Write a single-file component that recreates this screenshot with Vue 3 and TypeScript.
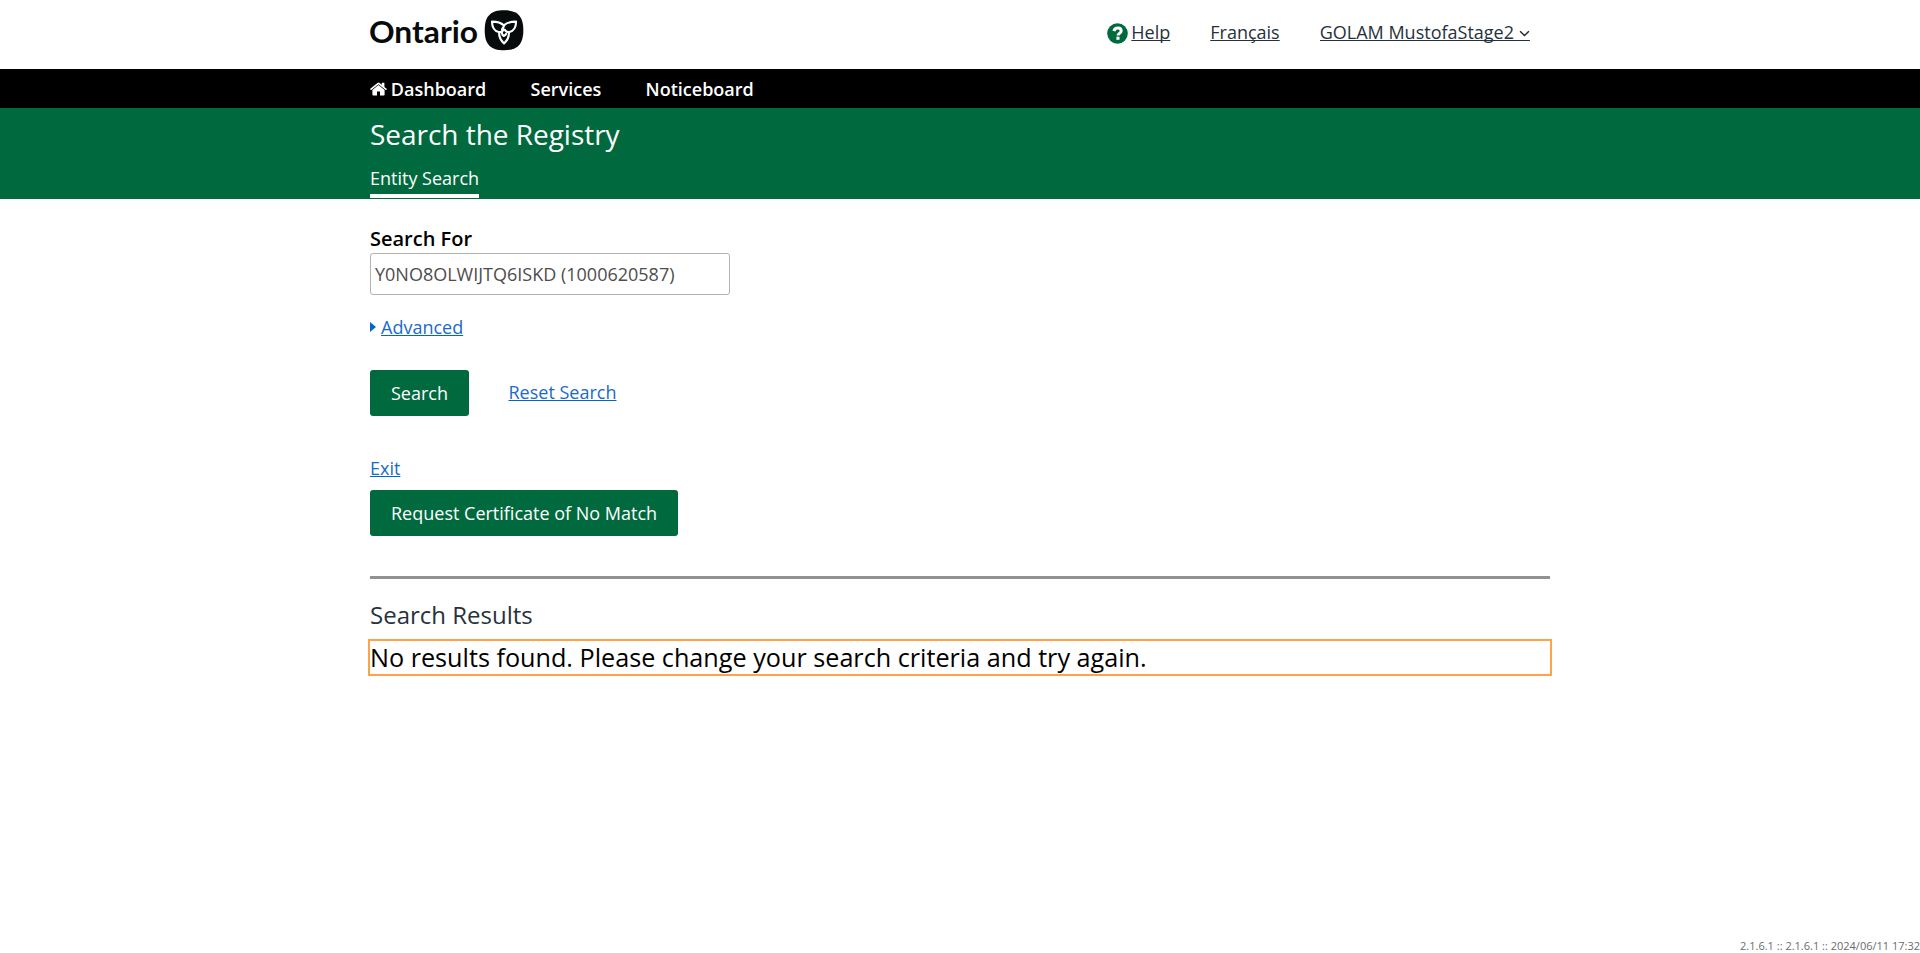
<script setup lang="ts">
import { ref } from 'vue'

const query = ref('Y0NO8OLWIJTQ6ISKD (1000620587)')
const navLinks: string[] = ['Services', 'Noticeboard']
const version = '2.1.6.1 :: 2.1.6.1 :: 2024/06/11 17:32'
</script>

<template>
  <div class="page">
    <header class="masthead">
      <div class="container masthead-row">
        <a class="logo" aria-label="Ontario">
          <svg width="154" height="60" viewBox="0 0 154 60">
            <text class="wordmark" x="-1" y="42.9" textLength="109" lengthAdjust="spacingAndGlyphs">Ontario</text>
            <g transform="translate(114.7 10.3) scale(0.33333)">
              <path d="M58 0C98 0 116 17 116 60S98 120 58 120 0 103 0 60 18 0 58 0Z" fill="#070b0b" />
              <g fill="none" stroke="#fff" stroke-width="6.5" stroke-linejoin="round" stroke-linecap="round">
                <path d="M52 57C56 50 60 48 57 45C48 36 36 34 22 34C22 50 29 63 42 65C50 66 54 63 55 59" />
                <path d="M58 45C67 36 80 34 94 34C94 50 87 63 74 65C67 66 62 63 60 58" />
                <path d="M43 66C43 79 47 90 58 99C69 90 73 79 73 66" />
                <path d="M55 58C49 65 51 74 58 77C61 75 63 73 64 71" />
              </g>
            </g>
          </svg>
        </a>
        <div class="tools">
          <span class="help">
            <svg class="help-icon" width="21" height="21" viewBox="0 0 21 21">
              <circle cx="10.5" cy="10.5" r="10.3" fill="#006a3e" />
              <path d="M6.9 8.1C7.4 6 8.9 5.1 10.7 5.1C12.8 5.1 14.2 6.3 14.2 8C14.2 10.3 11 10.1 11 12.5" fill="none" stroke="#fff" stroke-width="3" />
              <rect x="9.4" y="13.7" width="3.1" height="3.1" fill="#fff" />
            </svg>
            <a class="tool">Help</a>
          </span>
          <a class="tool">Français</a>
          <a class="tool user">
            <span>GOLAM MustofaStage2</span>
            <svg width="11" height="8" viewBox="0 0 11 8">
              <path d="M1.1 1.2L5.5 5.6L9.9 1.2" fill="none" stroke="#1d2932" stroke-width="1.4" />
            </svg>
          </a>
        </div>
      </div>
    </header>

    <nav class="nav">
      <div class="container nav-row">
        <a class="nav-link home">
          <svg width="17" height="14" viewBox="0 0 17 14" fill="#fff">
            <path d="M8.5 3.1L14.6 8.1V12.8Q14.6 13.5 13.9 13.5H10V9.5H7V13.5H3.1Q2.4 13.5 2.4 12.8V8.1Z" />
            <path d="M0 7.1L7.4 0.9Q8.5 0 9.6 0.9L11.8 2.8V0.8H14.4V5L17 7.1L16 8.3L8.5 2.2L1 8.3Z" />
          </svg>
          <span>Dashboard</span>
        </a>
        <a v-for="link in navLinks" :key="link" class="nav-link">{{ link }}</a>
      </div>
    </nav>

    <section class="banner">
      <div class="container">
        <h1>Search the Registry</h1>
        <a class="tab">Entity Search</a>
      </div>
    </section>

    <main class="container">
      <label class="label" for="query">Search For</label>
      <input id="query" v-model="query" class="field" type="text" />
      <div class="advanced">
        <span class="triangle"></span>
        <a class="link">Advanced</a>
      </div>
      <div class="actions">
        <button class="btn">Search</button>
        <a class="link reset">Reset Search</a>
      </div>
      <a class="link exit">Exit</a>
      <button class="btn">Request Certificate of No Match</button>
      <hr class="rule" />
      <h2>Search Results</h2>
      <p class="message">No results found. Please change your search criteria and try again.</p>
    </main>

    <footer class="version">{{ version }}</footer>
  </div>
</template>

<style>
body {
  margin: 0;
  background: #fff;
}
</style>

<style scoped>
.page {
  display: flex;
  flex-direction: column;
  box-sizing: border-box;
  height: 953px;
  overflow: hidden;
  font: 400 18px/24px "Open Sans", "Noto Sans", sans-serif;
  color: #26323b;
}
.container {
  width: 1180px;
  margin: 0 auto;
}
.masthead {
  height: 69px;
}
.masthead-row {
  display: flex;
  justify-content: space-between;
}
.logo svg {
  display: block;
}
.wordmark {
  font: 700 29.5px Lato, "Open Sans", sans-serif;
  fill: #070b0b;
}
.tools {
  display: flex;
  gap: 40px;
  padding: 20px 20px 0 0;
}
.help {
  display: flex;
  gap: 3.6px;
}
.help-icon {
  margin-top: 3px;
}
.tool {
  height: 24px;
  text-decoration: underline;
  text-decoration-thickness: 1px;
  text-decoration-skip-ink: none;
  white-space: nowrap;
}
.user {
  display: flex;
  align-items: center;
  gap: 5px;
  text-decoration: none;
  background: linear-gradient(#26323b, #26323b) 0 20px / 100% 1px no-repeat;
}
.user svg {
  margin-top: 3px;
}
.nav {
  height: 39px;
  background: #000;
}
.nav-row {
  display: flex;
  gap: 44.3px;
  padding-top: 8px;
}
.nav-link {
  font-weight: 600;
  color: #fff;
}
.home {
  display: flex;
  gap: 3.8px;
}
.home svg {
  margin-top: 5px;
}
.banner {
  height: 91px;
  background: #006a3e;
  color: #fff;
}
h1 {
  margin: 0;
  padding: 7px 0 13px;
  font-size: 28px;
  line-height: 38px;
  font-weight: 400;
  letter-spacing: -0.03px;
}
.tab {
  display: block;
  width: fit-content;
  padding-bottom: 4px;
  border-bottom: 4px solid #fff;
}
main.container {
  display: flex;
  flex-direction: column;
  align-items: flex-start;
  flex: 1;
}
.label {
  margin-top: 26px;
  font-size: 20px;
  line-height: 27px;
  font-weight: 600;
  color: #000;
}
.field {
  box-sizing: border-box;
  width: 360px;
  height: 42px;
  margin: 1px 0 0;
  padding: 0 4px;
  border: 1px solid #b3b3b3;
  border-radius: 3px;
  outline: none;
  background: #fff;
  font: inherit;
  color: #4d4d4d;
}
.advanced {
  display: flex;
  align-items: center;
  gap: 5px;
  margin-top: 20px;
}
.triangle {
  border-left: 6px solid #0066cc;
  border-top: 5.5px solid transparent;
  border-bottom: 5.5px solid transparent;
}
.link {
  color: #1a6acb;
  text-decoration: underline;
  text-decoration-color: #0066cc;
  text-decoration-thickness: 1px;
  text-decoration-skip-ink: none;
}
.actions {
  display: flex;
  gap: 39.5px;
  margin-top: 31px;
}
.reset {
  margin-top: 10px;
}
.btn {
  height: 46px;
  padding: 0 21px;
  border: 0;
  border-radius: 3px;
  background: #006a3e;
  font: inherit;
  color: #fff;
}
.exit {
  margin: 40px 0 10px;
}
.rule {
  width: 100%;
  height: 3px;
  margin: 40px 0 0;
  border: 0;
  background: #929292;
}
h2 {
  margin: 19px 0 0;
  font-size: 24px;
  line-height: 33px;
  font-weight: 400;
}
.message {
  width: 100%;
  margin: 10px 0 0;
  outline: 2px solid #ffa347;
  font-size: 25.2px;
  line-height: 33px;
  color: #000;
}
.version {
  align-self: flex-end;
  font-size: 11px;
  line-height: 15px;
  color: #6b6b6b;
}
</style>
